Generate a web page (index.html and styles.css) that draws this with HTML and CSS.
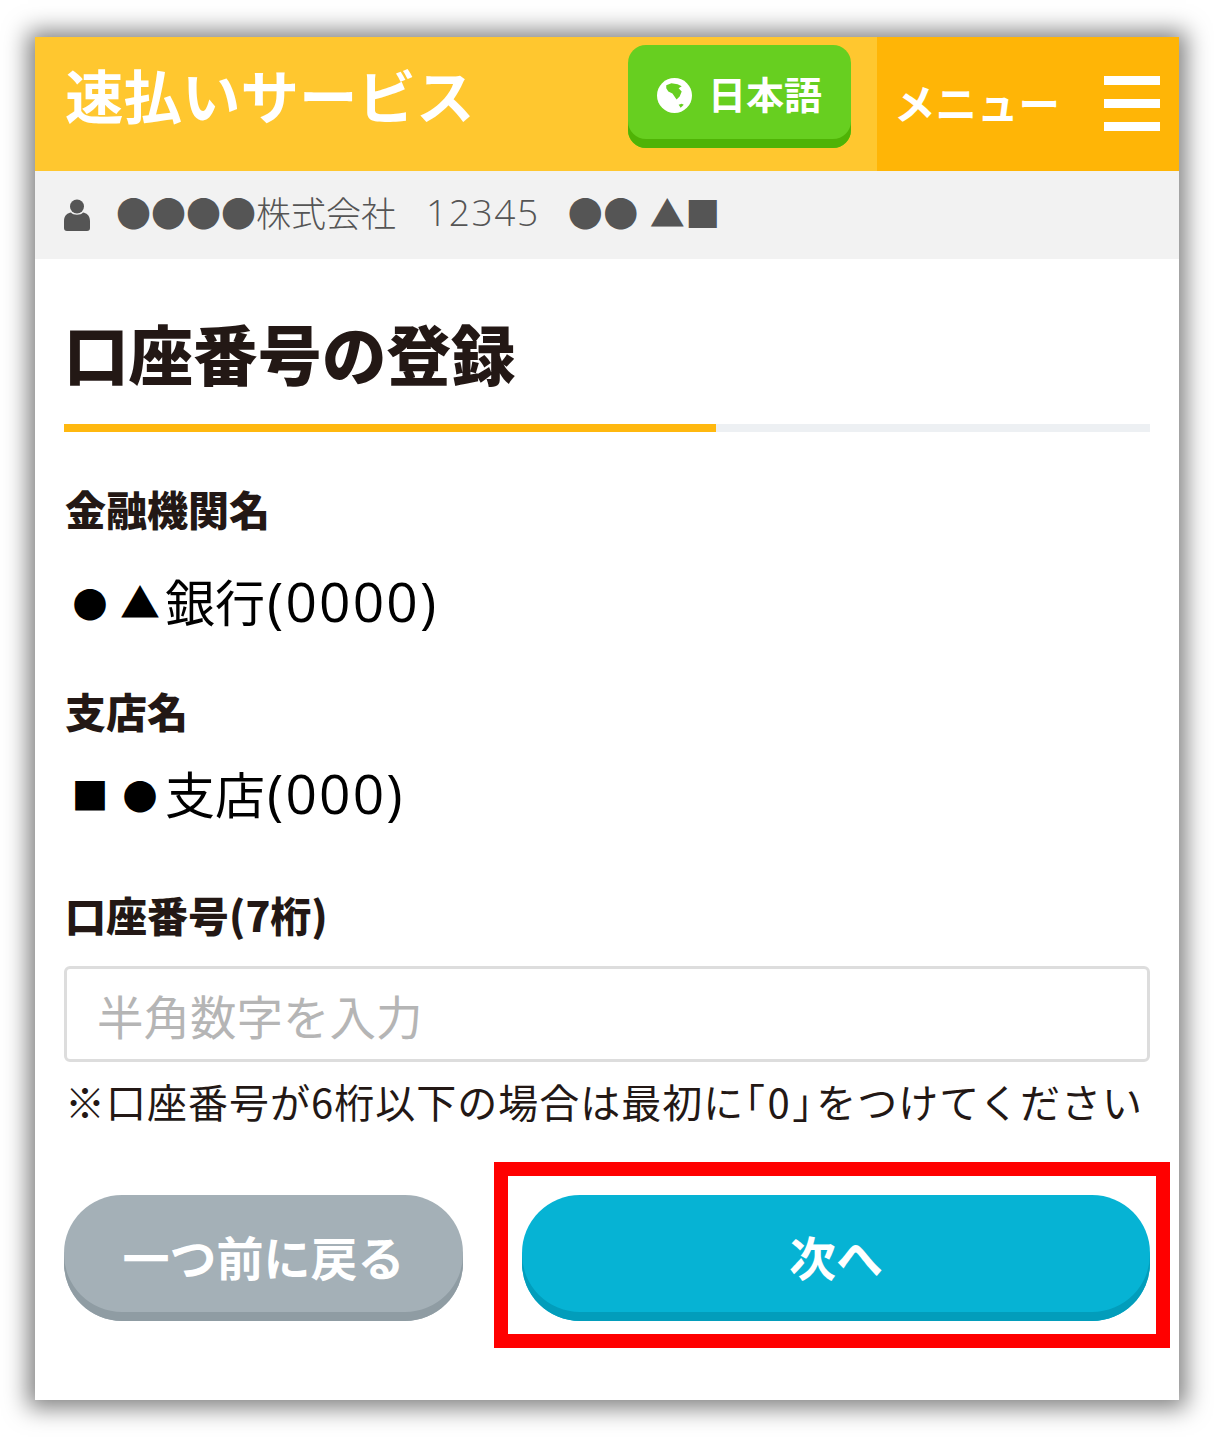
FILE: index.html
```html
<!DOCTYPE html>
<html lang="ja">
<head>
  <meta charset="UTF-8" />
  <title>速払いサービス</title>
  <link rel="stylesheet" href="styles.css">
</head>
<body>
  <div class="frame">
    <header class="top">
      <div class="brand">
        <div class="logo">速払いサービス</div>
        <div class="lang">
          <svg class="globe" viewBox="0 0 34 34">
            <circle cx="17" cy="17" r="17" fill="#fff"/>
            <path d="M9 7 L14 5 L20 6 L24 8 L21 10 L24 13 L22 18 L19 21 L17 18 L15 15 L11 13 L9 10 Z" fill="#67cf20"/>
            <path d="M21 26 L24 25 L26 26 L23 29 Z" fill="#67cf20"/>
          </svg>
          <span>日本語</span>
        </div>
      </div>
      <div class="menu">
        <span class="menu-text">メニュー</span>
        <div class="bars"><i></i><i></i><i></i></div>
      </div>
    </header>

    <div class="user">
      <svg class="person" viewBox="0 0 26 32">
        <circle cx="13" cy="7.5" r="7" fill="#555"/>
        <path d="M0 29 V22 C0 16 4 14 7 13.5 C9 16.5 17 16.5 19 13.5 C22 14 26 16 26 22 V29 C26 31 25 32 23 32 H3 C1 32 0 31 0 29 Z" fill="#555"/>
      </svg>
      <span class="company">●●●●株式会社</span>
      <span class="code">12345</span>
      <span class="name">●● ▲■</span>
    </div>

    <main class="body">
      <h1 class="title">口座番号の登録</h1>
      <div class="progress"><div class="progress-fill" style="width: 60%"></div></div>

      <div class="label label-first">金融機関名</div>
      <div class="value"><span class="mark mark-circle">●</span><span class="mark mark-triangle">▲</span>銀行<span class="num">(0000)</span></div>
      <div class="label label-second">支店名</div>
      <div class="value value-second"><span class="mark mark-square">■</span><span class="mark mark-circle">●</span>支店<span class="num">(000)</span></div>
      <div class="label label-third">口座番号(7桁)</div>
      <input class="field" type="text" placeholder="半角数字を入力">
      <p class="note">※口座番号が6桁以下の場合は最初に<span class="brackets">「0」</span>をつけてください</p>

      <div class="actions">
        <button class="btn btn-back">一つ前に戻る</button>
        <button class="btn btn-next">次へ</button>
        <div class="highlight"></div>
      </div>
    </main>
  </div>
</body>
</html>
```

FILE: styles.css
```css
* {
  box-sizing: border-box;
}
body {
  margin: 0;
  padding: 37px 0;
  background: #fff;
  font-family: "Noto Sans CJK JP", "Noto Sans", sans-serif;
  color: #231815;
}
.frame {
  width: 1144px;
  height: 1363px;
  margin-left: 35px;
  background: #fff;
  box-shadow: 0 1px 22px 7px rgba(0,0,0,0.5);
}
.top {
  display: flex;
  height: 134px;
  color: #fff;
}
.brand {
  flex: 1;
  display: flex;
  justify-content: space-between;
  align-items: flex-start;
  background: #ffc72f;
  padding: 8px 26px 0 30px;
}
.logo {
  font-size: 58.5px;
  font-weight: 700;
  line-height: 88px;
  margin-top: 5px;
  white-space: nowrap;
}
.lang {
  width: 223px;
  height: 103px;
  display: flex;
  align-items: center;
  justify-content: center;
  gap: 16px;
  padding-bottom: 9px;
  background: #67cf20;
  border-radius: 18px;
  box-shadow: inset 0 -9px 0 #4fb306;
  font-size: 38px;
  font-weight: 700;
}
.globe {
  width: 35px;
  height: 35px;
  margin-top: 6px;
}
.menu {
  width: 302px;
  display: flex;
  justify-content: space-between;
  align-items: center;
  background: #ffb506;
  padding: 0 19px 0 17px;
}
.menu-text {
  font-size: 41.5px;
  font-weight: 700;
  margin-bottom: 4px;
}
.bars {
  width: 56px;
  display: flex;
  flex-direction: column;
  gap: 14px;
  margin-bottom: 2px;
}
.bars i {
  display: block;
  height: 9px;
  background: #fff;
}
.user {
  height: 88px;
  display: flex;
  align-items: center;
  padding: 0 0 8px 29px;
  background: #f2f2f2;
  color: #555;
  font-size: 35px;
  font-weight: 300;
  white-space: nowrap;
}
.person {
  width: 26px;
  height: 32px;
  margin: 8px 26px 0 0;
}
.code {
  margin-left: 30px;
  font-family: "Open Sans", sans-serif;
  font-size: 37px;
  letter-spacing: 1.6px;
}
.name {
  margin-left: 28px;
  word-spacing: 3px;
  letter-spacing: 0.5px;
}
.body {
  padding: 55px 29px 0;
}
.title {
  margin: 0;
  font-size: 64.5px;
  font-weight: 900;
  line-height: 76px;
  white-space: nowrap;
}
.progress {
  height: 8px;
  margin-top: 34px;
  background: #edf0f3;
}
.progress-fill {
  height: 8px;
  background: #ffb80f;
}
.label {
  font-size: 41px;
  font-weight: 900;
  line-height: 56px;
  padding-left: 1px;
}
.label-first {
  margin-top: 48px;
}
.label-second {
  margin-top: 44px;
}
.label-third {
  margin-top: 56px;
}
.value {
  font-size: 50px;
  line-height: 70px;
  margin-top: 29px;
  padding-left: 1px;
  color: #000;
  white-space: nowrap;
}
.value-second {
  margin-top: 19px;
}
.mark {
  display: inline-block;
  width: 50px;
  text-align: center;
  vertical-align: 4px;
}
.mark-circle {
  font-size: 35px;
}
.mark-triangle {
  font-size: 40px;
}
.mark-square {
  font-size: 37px;
}
.num {
  margin-left: 2px;
  font-family: "Open Sans", sans-serif;
  font-size: 55px;
  letter-spacing: 2.2px;
}
.field {
  display: block;
  width: 100%;
  height: 96px;
  margin-top: 24px;
  padding: 0 30px;
  border: 3px solid #ddd;
  border-radius: 6px;
  font-family: inherit;
  font-size: 46.5px;
  background: #fff;
}
.field::placeholder {
  color: #b5b5b5;
}
.note {
  margin: 11px 0 0;
  padding-left: 1px;
  font-size: 40px;
  line-height: 56px;
  letter-spacing: 1px;
  white-space: nowrap;
}
.brackets {
  font-feature-settings: "palt";
  letter-spacing: 3.3px;
}
.actions {
  position: relative;
  display: flex;
  gap: 59px;
  margin-top: 66px;
}
.btn {
  height: 126px;
  padding: 0 0 6px;
  border: none;
  border-radius: 58px;
  color: #fff;
  font-family: inherit;
  font-size: 47px;
  font-weight: 700;
}
.btn-back {
  width: 399px;
  background: #a4b0b7;
  box-shadow: inset 0 -9px 0 #8f9ca3;
}
.btn-next {
  flex: 1;
  background: #06b3d4;
  box-shadow: inset 0 -9px 0 #029dbb;
}
.highlight {
  position: absolute;
  left: 430px;
  top: -33px;
  width: 676px;
  height: 186px;
  border: 14px solid #f00;
}
```
